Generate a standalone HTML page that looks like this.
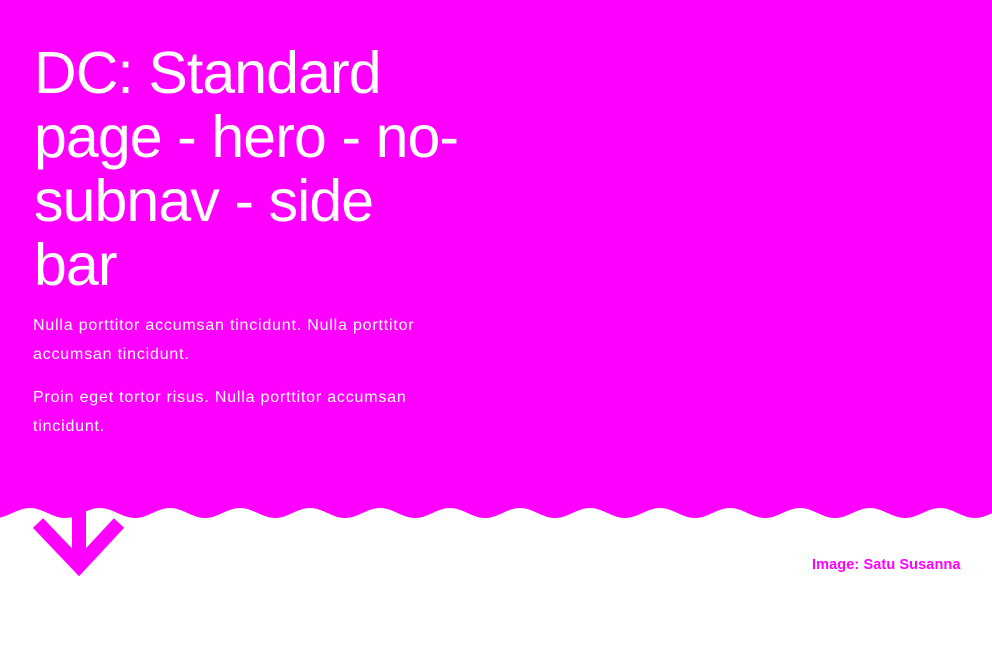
<!DOCTYPE html>
<html><head><meta charset="utf-8"><style>
html,body{margin:0;padding:0;width:992px;height:650px;overflow:hidden;background:#fff;font-family:"Liberation Sans",sans-serif}
.hero{position:absolute;left:0;top:0;width:992px;height:520px;background:#ff00ff}
h1{position:absolute;left:34px;top:41px;margin:0;white-space:nowrap;font-size:59px;line-height:64px;font-weight:400;color:#fff;letter-spacing:-0.9px}
.p{position:absolute;left:33px;white-space:nowrap;color:#fff;font-size:16px;line-height:29px;margin:0;letter-spacing:0.8px}
.cap{position:absolute;left:812px;top:557px;color:#ff00ff;font-weight:bold;font-size:14.5px;letter-spacing:0.1px}
</style></head><body>
<div class="hero"></div>
<svg style="position:absolute;left:0;top:490px" width="992" height="100" viewBox="0 490 992 100">
<path fill="#fff" d="M-5 518 C 8 518, 17 508, 30 508 S 52 518, 65 518 S 87 508, 100 508 S 122 518, 135 518 S 157 508, 170 508 S 192 518, 205 518 S 227 508, 240 508 S 262 518, 275 518 S 297 508, 310 508 S 332 518, 345 518 S 367 508, 380 508 S 402 518, 415 518 S 437 508, 450 508 S 472 518, 485 518 S 507 508, 520 508 S 542 518, 555 518 S 577 508, 590 508 S 612 518, 625 518 S 647 508, 660 508 S 682 518, 695 518 S 717 508, 730 508 S 752 518, 765 518 S 787 508, 800 508 S 822 518, 835 518 S 857 508, 870 508 S 892 518, 905 518 S 927 508, 940 508 S 962 518, 975 518 S 997 508, 1010 508 L1010 600 L-5 600 Z"/>
<g stroke="#ff00ff" stroke-width="14" fill="none">
<line x1="79" y1="505" x2="79" y2="565"/>
<polyline points="38,523 79,566 119,523" stroke-linejoin="miter"/>
</g>
</svg>
<h1>DC: Standard<br>page - hero - no-<br>subnav - side<br>bar</h1>
<p class="p" style="top:311px">Nulla porttitor accumsan tincidunt. Nulla porttitor<br>accumsan tincidunt.</p>
<p class="p" style="top:383px">Proin eget tortor risus. Nulla porttitor accumsan<br>tincidunt.</p>
<div class="cap">Image: Satu Susanna</div>
</body></html>
